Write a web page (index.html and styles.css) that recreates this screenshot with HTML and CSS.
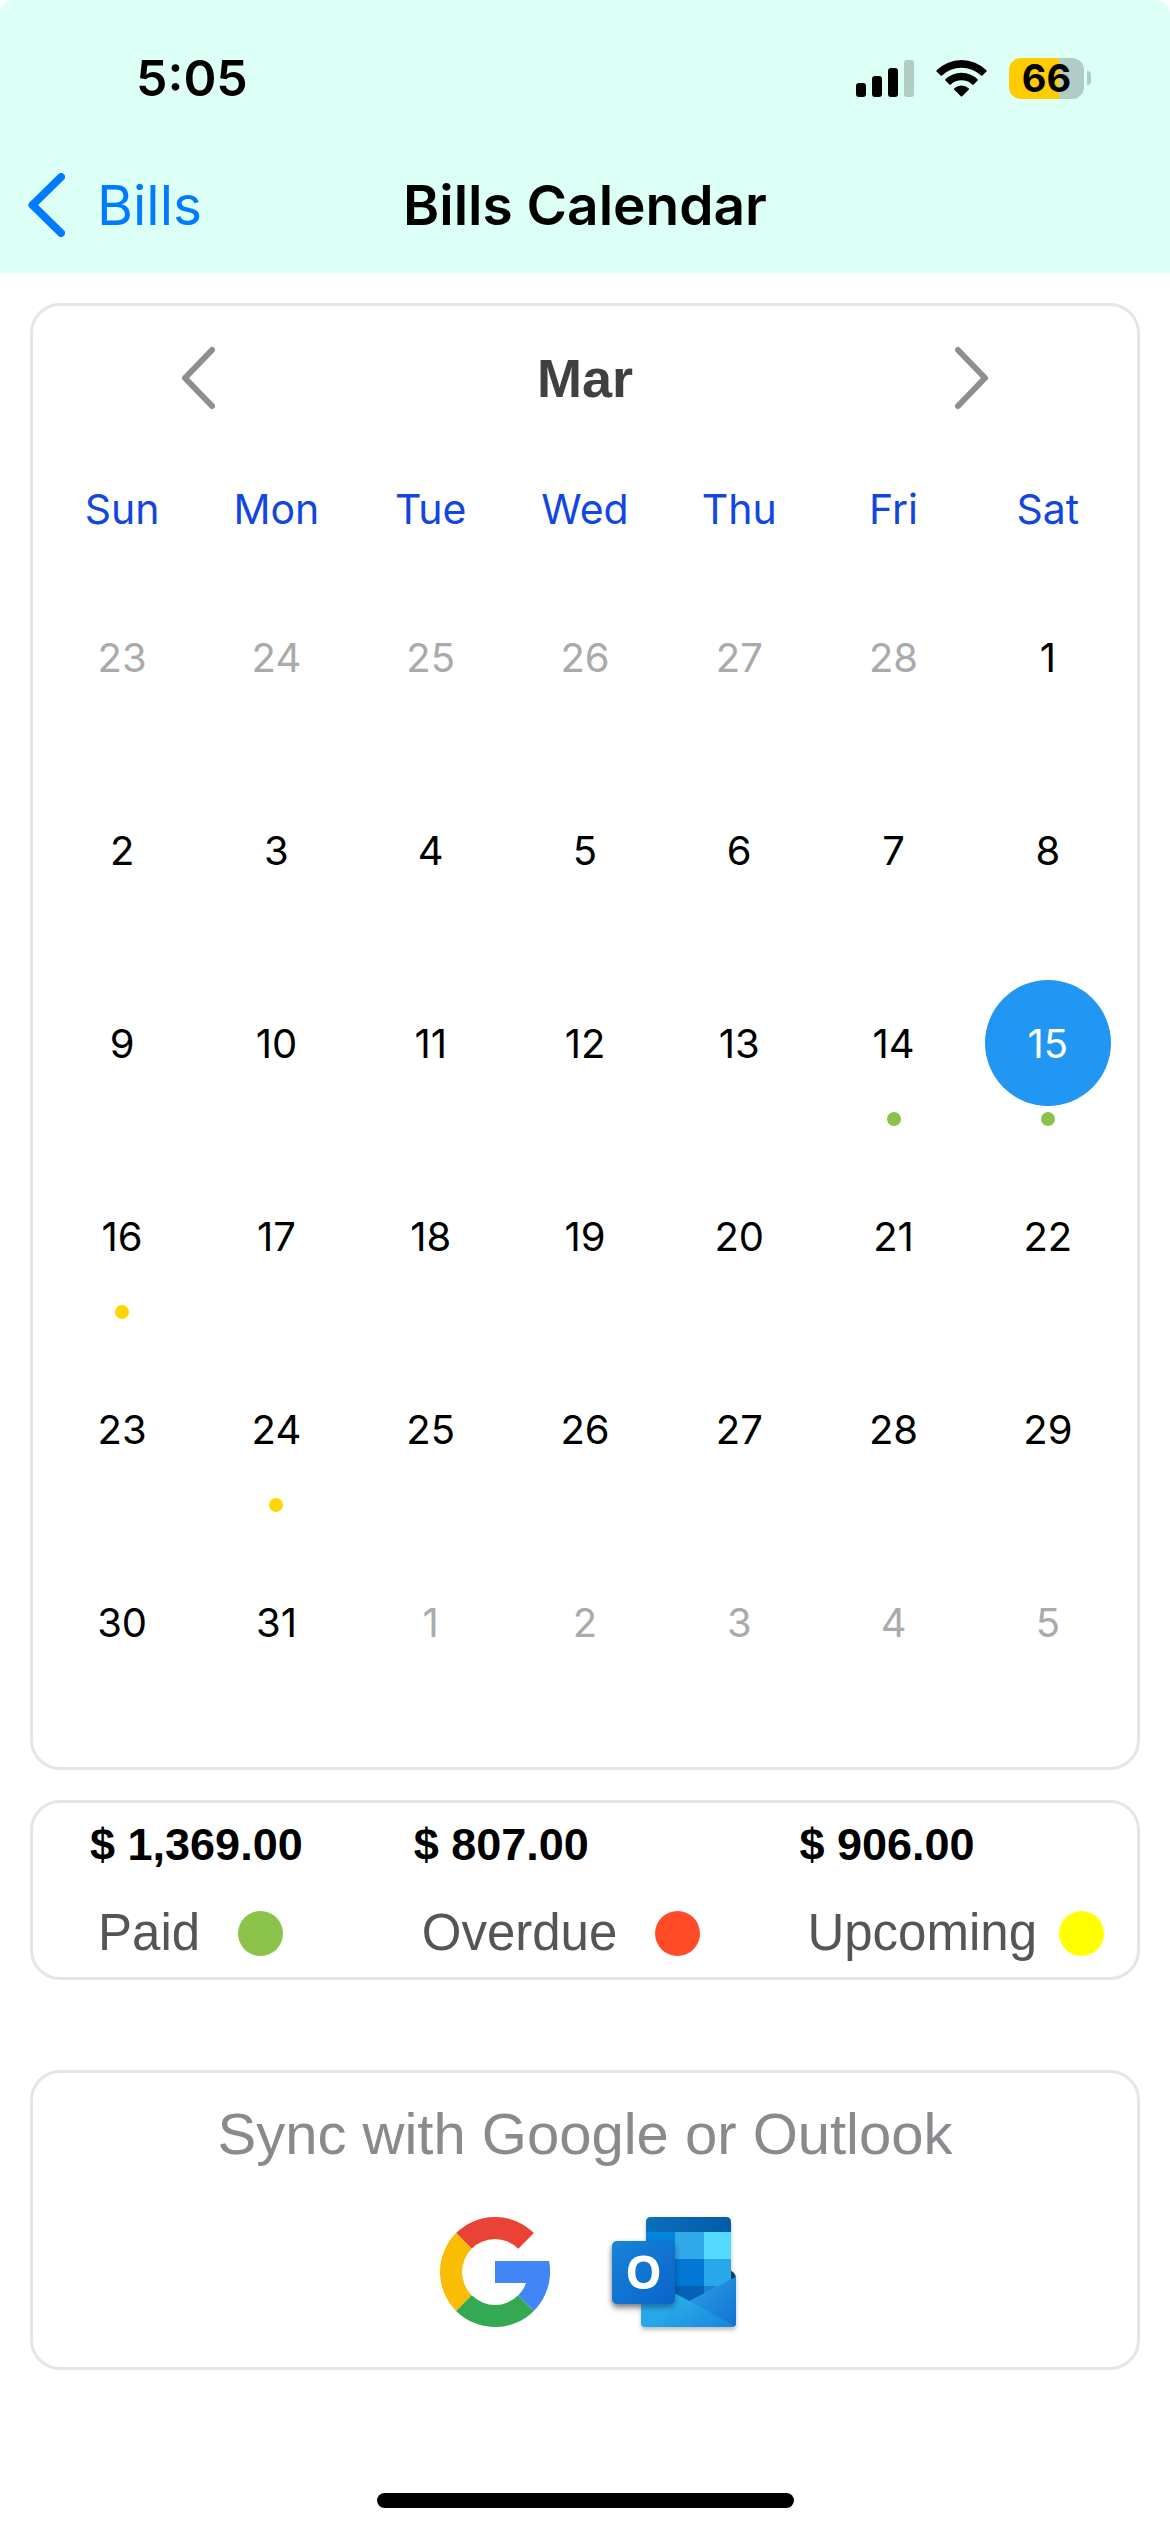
FILE: index.html
```html
<!DOCTYPE html>
<html lang="en">

<head>
    <meta charset="UTF-8">
    <meta name="viewport" content="width=device-width, initial-scale=1">
    <title>Bills Calendar</title>
    <link rel="stylesheet" href="styles.css">
</head>

<body>
    <header class="top">
        <div class="status-bar">
            <span class="clock">5:05</span>
            <div class="status-icons">
                <svg class="signal" width="58" height="37" viewBox="0 0 58 37" aria-hidden="true">
                    <rect x="0" y="23" width="10" height="14" rx="3" />
                    <rect x="16" y="16" width="10" height="21" rx="3" />
                    <rect x="32" y="8" width="10" height="29" rx="3" />
                    <rect class="off" x="48" y="0" width="10" height="37" rx="3" />
                </svg>
                <svg class="wifi" width="51" height="37" viewBox="0 0 51 37" aria-hidden="true">
                    <path d="M0.6 10.2 A35.5 35.5 0 0 1 50.4 10.2 Q51 10.9 50.4 11.5 L46.4 15.6 Q45.8 16.1 45.1 15.5 A28.5 28.5 0 0 0 5.9 15.5 Q5.2 16.1 4.6 15.6 L0.6 11.5 Q0 10.9 0.6 10.2 Z" />
                    <path d="M9.4 19.2 A23.2 23.2 0 0 1 41.6 19.2 Q42.3 19.9 41.6 20.5 L37.6 24.4 Q36.9 25 36.2 24.4 A15.8 15.8 0 0 0 14.8 24.4 Q14.1 25 13.4 24.4 L9.4 20.5 Q8.7 19.9 9.4 19.2 Z" />
                    <path d="M18.3 28.3 A11 11 0 0 1 32.7 28.3 Q33.4 29 32.7 29.7 L26.2 36.2 Q25.5 36.9 24.8 36.2 L18.3 29.7 Q17.6 29 18.3 28.3 Z" />
                </svg>
                <div class="battery">
                    <span class="battery-level">66</span>
                    <span class="battery-tip"></span>
                </div>
            </div>
        </div>
        <nav class="nav-bar">
            <a class="back" href="#bills">
                <svg width="37" height="64" viewBox="0 0 37 64" aria-hidden="true">
                    <path d="M33 4 L4.5 32 L33 60" />
                </svg>
                Bills
            </a>
            <h1>Bills Calendar</h1>
        </nav>
    </header>

    <main>
        <section class="card calendar">
            <div class="month-bar">
                <button type="button" aria-label="Previous month">
                    <svg width="34" height="70" viewBox="0 0 34 70" aria-hidden="true">
                        <path d="M31 7 L4 35 L31 63" />
                    </svg>
                </button>
                <h2>Mar</h2>
                <button type="button" aria-label="Next month">
                    <svg width="34" height="70" viewBox="0 0 34 70" aria-hidden="true">
                        <path d="M3 7 L30 35 L3 63" />
                    </svg>
                </button>
            </div>
            <table>
                <thead>
                    <tr>
                        <th>Sun</th>
                        <th>Mon</th>
                        <th>Tue</th>
                        <th>Wed</th>
                        <th>Thu</th>
                        <th>Fri</th>
                        <th>Sat</th>
                    </tr>
                </thead>
                <tbody id="days"></tbody>
            </table>
        </section>

        <section class="card totals">
            <div class="total">
                <strong>$ 1,369.00</strong>
                <span class="label">Paid <i class="dot paid"></i></span>
            </div>
            <div class="total">
                <strong>$ 807.00</strong>
                <span class="label">Overdue <i class="dot overdue"></i></span>
            </div>
            <div class="total tight">
                <strong>$ 906.00</strong>
                <span class="label">Upcoming <i class="dot upcoming"></i></span>
            </div>
        </section>

        <section class="card sync">
            <p>Sync with Google or Outlook</p>
            <div class="sync-buttons">
                <button type="button" aria-label="Sync with Google">
                    <svg width="110" height="110" viewBox="0 0 110 110" aria-hidden="true">
                        <path fill="#ea4335" d="M16.1 16.1 A55 55 0 0 1 93.9 16.1 L78.3 31.7 A33 33 0 0 0 31.7 31.7 Z" />
                        <path fill="#fbbc05" d="M16.1 16.1 A55 55 0 0 0 16.1 93.9 L31.7 78.3 A33 33 0 0 1 31.7 31.7 Z" />
                        <path fill="#34a853" d="M16.1 93.9 A55 55 0 0 0 93.9 93.9 L78.3 78.3 A33 33 0 0 1 31.7 78.3 Z" />
                        <path fill="#4285f4" d="M55 44 H109 A55 55 0 0 1 93.9 93.9 L78.3 78.3 A33 33 0 0 0 86.1 66 H55 Z" />
                    </svg>
                </button>
                <button type="button" aria-label="Sync with Outlook">
                    <svg class="outlook" width="124" height="110" viewBox="0 0 124 110" aria-hidden="true">
                        <defs>
                            <linearGradient id="tile" x1="0" y1="0" x2="1" y2="1">
                                <stop offset="0" stop-color="#1784d9" />
                                <stop offset="1" stop-color="#0a63c9" />
                            </linearGradient>
                            <linearGradient id="envelope" x1="0" y1="0" x2="1" y2="1">
                                <stop offset="0.5" stop-color="#28a8ea" />
                                <stop offset="1" stop-color="#1784d9" />
                            </linearGradient>
                            <linearGradient id="flap" x1="0" y1="0" x2="1" y2="1">
                                <stop offset="0.3" stop-color="#2493e0" />
                                <stop offset="1" stop-color="#1272d2" />
                            </linearGradient>
                            <linearGradient id="cover" x1="0" y1="0" x2="1" y2="0">
                                <stop offset="0" stop-color="#0a6fba" />
                                <stop offset="1" stop-color="#035ca8" />
                            </linearGradient>
                            <clipPath id="envelope-shape">
                                <path d="M29 60 L63 76.5 L77.5 84 L124 60 V106 Q124 110 120 110 H33 Q29 110 29 106 Z" />
                            </clipPath>
                        </defs>
                        <path fill="#123b6d" d="M117 52 L122 56 Q124 58 124 61 L117 66 Z" />
                        <path fill="url(#cover)" d="M34 15 V5 Q34 0 39 0 H114 Q119 0 119 5 V15 Z" />
                        <path fill="#0086dc" d="M34 15 H63 V70 H34 Z" />
                        <path fill="#32a9e8" d="M63 15 H92 V42 H63 Z" />
                        <path fill="#54d9ff" d="M92 15 H119 V42 H92 Z" />
                        <path fill="#0078d4" d="M63 42 H92 V69 H63 Z" />
                        <path fill="#28a8ea" d="M92 42 H119 V69 H92 Z" />
                        <path fill="#0461b5" d="M40 69 H92 V86 H40 Z" />
                        <path fill="#1683d4" d="M92 69 H106 L92 77 Z" />
                        <g clip-path="url(#envelope-shape)">
                            <path fill="url(#envelope)" d="M29 50 H124 V110 H29 Z" />
                            <path fill="url(#flap)" d="M77.5 84 L124 59 V110 Z" />
                        </g>
                        <g class="tile">
                            <rect fill="url(#tile)" x="0" y="24" width="63" height="63" rx="5" />
                            <text x="31.5" y="72" text-anchor="middle">O</text>
                        </g>
                    </svg>
                </button>
            </div>
        </section>
    </main>

    <div class="home-indicator"></div>

    <script>
        const selectedDay = 15;
        const daysInMonth = 31;
        const firstVisible = -5; // grid opens on 23 Feb
        const previousMonthDays = 28;
        const bills = {
            14: "paid",
            15: "paid",
            16: "due",
            24: "due"
        };

        const tbody = document.getElementById("days");

        for (let week = 0; week < 6; week++) {
            const row = document.createElement("tr");
            for (let weekday = 0; weekday < 7; weekday++) {
                const day = firstVisible + week * 7 + weekday;
                const cell = document.createElement("td");
                const button = document.createElement("button");
                button.type = "button";
                button.className = "day";

                if (day < 1) {
                    button.textContent = day + previousMonthDays;
                    button.classList.add("outside");
                } else if (day > daysInMonth) {
                    button.textContent = day - daysInMonth;
                    button.classList.add("outside");
                } else {
                    button.textContent = day;
                }
                if (day === selectedDay) {
                    button.classList.add("selected");
                }
                cell.appendChild(button);

                if (bills[day]) {
                    const mark = document.createElement("span");
                    mark.className = "mark " + bills[day];
                    cell.appendChild(mark);
                }
                row.appendChild(cell);
            }
            tbody.appendChild(row);
        }
    </script>
</body>

</html>
```
FILE: styles.css
```css
* {
    box-sizing: border-box;
}

body {
    margin: 0;
    min-height: 100vh;
    display: flex;
    flex-direction: column;
    background-color: #fff;
    color: #000;
    font-family: Inter, "Liberation Sans", sans-serif;
}

button {
    padding: 0;
    border: none;
    background: none;
    font: inherit;
    color: inherit;
    cursor: pointer;
}

svg {
    display: block;
}

h1,
h2,
p {
    margin: 0;
}

/* header */
.top {
    background-color: #dcfff6;
    border-radius: 14px 14px 0 0;
}

.status-bar {
    height: 138px;
    padding: 18px 79px 0 136px;
    display: flex;
    align-items: center;
    justify-content: space-between;
}

.clock {
    font-size: 50px;
    font-weight: 600;
}

.status-icons {
    display: flex;
    align-items: center;
    gap: 22px;
}

.signal .off {
    fill: #b0ccc5;
}

.battery {
    display: flex;
    align-items: center;
    gap: 3px;
}

.battery-level {
    width: 75px;
    height: 41px;
    border-radius: 12px;
    background: linear-gradient(to right, #ffcc00 67%, #b0ccc5 67%);
    font-size: 38px;
    font-weight: 700;
    line-height: 41px;
    text-align: center;
}

.battery-tip {
    width: 4px;
    height: 14px;
    border-radius: 0 4px 4px 0;
    background-color: #b0ccc5;
}

.nav-bar {
    height: 135px;
    padding: 0 28px 2px;
    display: grid;
    grid-template-columns: 1fr auto 1fr;
    align-items: center;
}

.back {
    display: flex;
    align-items: center;
    gap: 32px;
    color: #007aff;
    font-size: 55px;
    text-decoration: none;
}

.back path {
    fill: none;
    stroke: #007aff;
    stroke-width: 8;
    stroke-linecap: round;
    stroke-linejoin: round;
}

h1 {
    font-size: 55px;
    font-weight: 600;
}

/* cards */
main {
    padding: 30px 30px 60px;
    display: flex;
    flex-direction: column;
    gap: 30px;
}

.card {
    border: 3px solid #e5e5e5;
    border-radius: 30px;
}

.calendar {
    padding: 0 12px 42px;
}

.month-bar {
    height: 144px;
    padding: 0 136px;
    display: flex;
    align-items: center;
    justify-content: space-between;
}

.month-bar path {
    fill: none;
    stroke: #8e8e8e;
    stroke-width: 6;
    stroke-linecap: round;
    stroke-linejoin: round;
}

h2 {
    color: #404040;
    font-family: "Liberation Sans", Arial, sans-serif;
    font-size: 54px;
    font-weight: 700;
}

table {
    width: 100%;
    table-layout: fixed;
    border-collapse: collapse;
}

th {
    height: 117px;
    padding: 0;
    color: #1246e0;
    font-size: 41px;
    font-weight: 400;
}

td {
    height: 193px;
    padding: 27px 0 0;
    text-align: center;
    vertical-align: top;
}

.day {
    display: block;
    width: 126px;
    height: 126px;
    margin: 0 auto;
    border-radius: 50%;
    font-size: 40px;
}

.day.outside {
    color: #aaa;
}

.day.selected {
    background-color: #2196f3;
    color: #fff;
}

.mark {
    display: block;
    width: 14px;
    height: 14px;
    margin: 6px auto 0;
    border-radius: 50%;
}

.mark.paid {
    background-color: #8bc34a;
}

.mark.due {
    background-color: #ffd600;
}

/* totals */
.totals {
    height: 180px;
    padding: 12px 33px 0 57px;
    display: grid;
    grid-template-columns: 324fr 386fr 304fr;
    font-family: "Liberation Sans", Arial, sans-serif;
}

.total strong {
    display: block;
    font-size: 45px;
    line-height: 60px;
}

.label {
    padding: 28px 0 0 8px;
    display: flex;
    align-items: center;
    gap: 38px;
    color: #555;
    font-size: 51px;
    line-height: 60px;
}

.tight .label {
    gap: 22px;
}

.dot {
    width: 45px;
    height: 45px;
    border-radius: 50%;
}

.dot.paid {
    background-color: #8bc34a;
}

.dot.overdue {
    background-color: #ff4b28;
}

.dot.upcoming {
    background-color: #ffff00;
}

/* sync */
.sync {
    margin-top: 60px;
    padding: 28px 0 40px;
    font-family: "Liberation Sans", Arial, sans-serif;
}

.sync p {
    color: #8a8a8e;
    font-size: 58px;
    line-height: 66px;
    text-align: center;
}

.sync-buttons {
    margin-top: 50px;
    padding-left: 6px;
    display: flex;
    justify-content: center;
    gap: 62px;
}

.outlook {
    overflow: visible;
    filter: drop-shadow(0 3px 2px rgba(0, 0, 0, 0.25));
}

.outlook .tile {
    filter: drop-shadow(0 3px 3px rgba(0, 0, 0, 0.35));
}

.outlook text {
    fill: #fff;
    font-family: "Open Sans", "Noto Sans", sans-serif;
    font-size: 46px;
    font-weight: 700;
}

.home-indicator {
    width: 417px;
    height: 15px;
    margin: auto auto 24px;
    border-radius: 8px;
    background-color: #000;
}
```
